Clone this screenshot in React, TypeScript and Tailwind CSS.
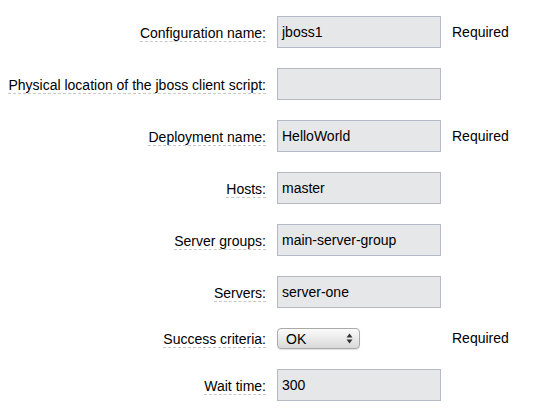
import React from "react";

type Row = { label: string; value?: string; required?: boolean; select?: boolean };

const rows: Row[] = [
  { label: "Configuration name:", value: "jboss1", required: true },
  { label: "Physical location of the jboss client script:", value: "" },
  { label: "Deployment name:", value: "HelloWorld", required: true },
  { label: "Hosts:", value: "master" },
  { label: "Server groups:", value: "main-server-group" },
  { label: "Servers:", value: "server-one" },
  { label: "Success criteria:", select: true, required: true },
  { label: "Wait time:", value: "300" },
];

export default function App() {
  return (
    <div
      className="w-[536px] h-[412px] bg-white text-[14px] text-black overflow-hidden"
      style={{ fontFamily: '"Liberation Sans", Arial, Helvetica, sans-serif' }}
    >
      <div className="grid grid-cols-[266px_164px_auto] gap-x-[11px] gap-y-[20px] pt-[16px] items-center">
        {rows.map((r, i) => (
          <React.Fragment key={i}>
            <div className="flex justify-end">
              <span className="border-b border-dashed border-[#c8c8c8] leading-[16px] pt-[2px]">{r.label}</span>
            </div>
            {r.select ? (
              <div className="w-[83px] h-[21px] rounded-[4px] border border-[#a9a9a9] bg-gradient-to-b from-[#fbfbfb] to-[#d9d9d9] flex items-center justify-between pl-[8px] pr-[6px] shadow-[0_1px_1px_rgba(0,0,0,0.12)]">
                <span className="leading-none">OK</span>
                <svg width="7" height="11" viewBox="0 0 7 11">
                  <path d="M3.5 0.5 L6.5 4.5 L0.5 4.5 Z" fill="#333" />
                  <path d="M3.5 10.5 L6.5 6.5 L0.5 6.5 Z" fill="#333" />
                </svg>
              </div>
            ) : (
              <div className="w-[164px] h-[32px] border border-[#b6bac6] bg-[#e6e7e9] flex items-center pl-[4px]">
                <span className="text-[14px]">{r.value}</span>
              </div>
            )}
            <div>{r.required ? "Required" : ""}</div>
          </React.Fragment>
        ))}
      </div>
    </div>
  );
}
